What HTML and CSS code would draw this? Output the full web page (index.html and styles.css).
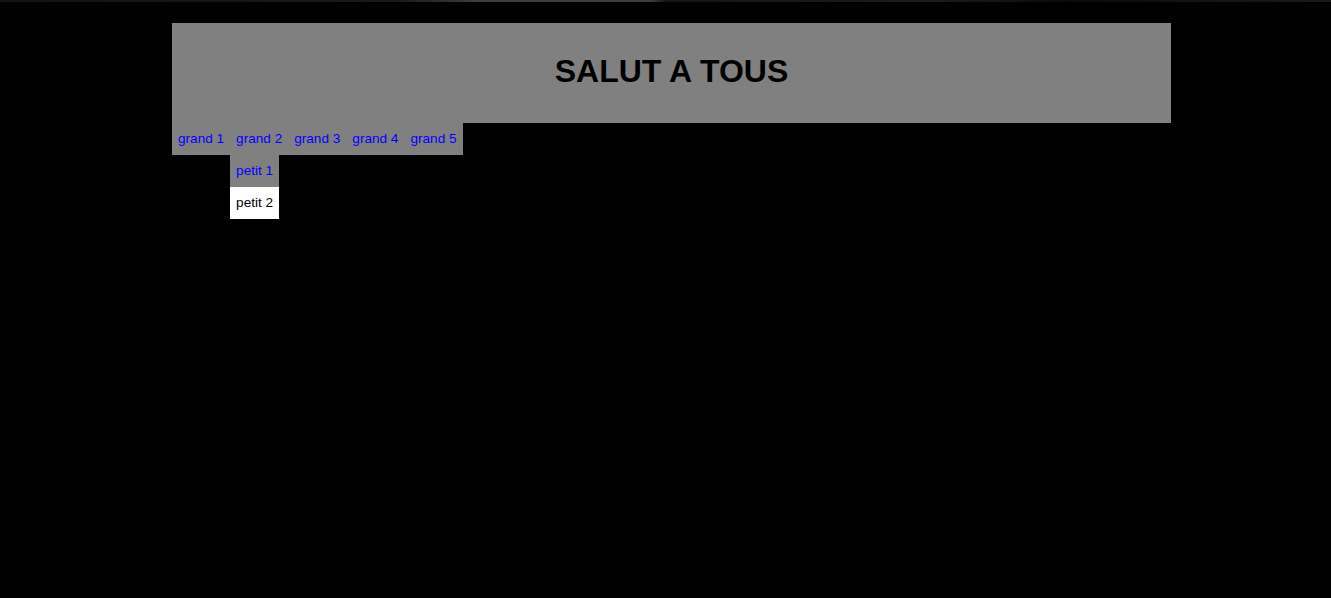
FILE: index.html
```html
<!DOCTYPE html>
<html lang="fr">
<head>
<meta charset="utf-8">
<title>Salut</title>
<link rel="stylesheet" href="styles.css">
</head>
<body>
<div class="topline"></div>
<div class="page">
  <header class="banner">
    <h1 class="title">SALUT A TOUS</h1>
  </header>
  <nav class="menu">
    <ul class="menu-list">
      <li class="menu-item"><a class="menu-link" href="#">grand 1</a></li>
      <li class="menu-item open"><a class="menu-link" href="#">grand 2</a>
        <ul class="submenu">
          <li class="sub-item"><a class="sub-link" href="#">petit 1</a></li>
          <li class="sub-item active"><a class="sub-link" href="#">petit 2</a></li>
        </ul>
      </li>
      <li class="menu-item"><a class="menu-link" href="#">grand 3</a></li>
      <li class="menu-item"><a class="menu-link" href="#">grand 4</a></li>
      <li class="menu-item"><a class="menu-link" href="#">grand 5</a></li>
    </ul>
  </nav>
</div>
</body>
</html>
```

FILE: styles.css
```css
html, body {
  margin: 0;
  padding: 0;
  background: #000;
  font-family: "Liberation Sans", Arial, sans-serif;
}
.topline {
  height: 2px;
  background: linear-gradient(90deg, #111 0%, #1a1a1a 30%, #3c3c3c 36%, #3c3c3c 49%, #151515 50%, #1c1c1c 70%, #0a0a0a 80%, #1a1a1a 100%);
}
.page {
  width: 999px;
  margin: 21px 0 0 172px;
}
.banner {
  height: 100px;
  box-sizing: border-box;
  padding-bottom: 3px;
  background: #808080;
  display: flex;
  align-items: center;
  justify-content: center;
}
.title {
  margin: 0;
  font-size: 32px;
  font-weight: bold;
  color: #000;
}
.menu-list {
  list-style: none;
  margin: 0;
  padding: 0;
  display: flex;
  align-items: flex-start;
}
.menu-item {
  display: flex;
  flex-direction: column;
  align-items: flex-start;
}
.menu-link,
.sub-link {
  display: block;
  padding: 6px;
  line-height: 20px;
  font-size: 13.6px;
  color: #0000ff;
  background: #808080;
  text-decoration: none;
  white-space: nowrap;
}
.submenu {
  list-style: none;
  margin: 0;
  padding: 0;
}
.sub-item.active .sub-link {
  background: #fff;
  color: #000;
}
```
